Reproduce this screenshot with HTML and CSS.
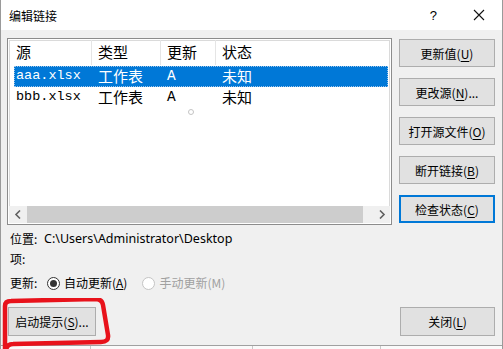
FILE: index.html
```html
<!DOCTYPE html>
<html lang="zh-CN">
<head>
    <meta charset="UTF-8">
    <meta name="viewport" content="width=device-width, initial-scale=1.0">
    <title>编辑链接</title>
    <link rel="stylesheet" href="styles.css">
</head>
<body>
    <div class="dialog">
        <div class="titlebar">
            <span class="title">编辑链接</span>
            <span class="help">?</span>
            <svg class="close-x" width="12" height="12" viewBox="0 0 12 12">
                <path d="M1 1 L11 11 M11 1 L1 11" stroke="#111" stroke-width="1.1" fill="none"/>
            </svg>
        </div>

        <div class="content">
            <div class="main">
                <div class="listbox">
                    <div class="list-head">
                        <div class="col c1">源</div>
                        <div class="col c2">类型</div>
                        <div class="col c3">更新</div>
                        <div class="col c4">状态</div>
                    </div>
                    <div class="list-row selected">
                        <div class="col c1 mono">aaa.xlsx</div>
                        <div class="col c2">工作表</div>
                        <div class="col c3 mono">A</div>
                        <div class="col c4">未知</div>
                    </div>
                    <div class="list-row">
                        <div class="col c1 mono">bbb.xlsx</div>
                        <div class="col c2">工作表</div>
                        <div class="col c3 mono">A</div>
                        <div class="col c4">未知</div>
                    </div>
                    <div class="list-fill">
                        <span class="dot"></span>
                    </div>
                    <div class="hscroll">
                        <div class="arrow">
                            <svg width="8" height="9" viewBox="0 0 8 9"><path d="M6 0.5 L2 4.5 L6 8.5" stroke="#606060" stroke-width="1.6" fill="none"/></svg>
                        </div>
                        <div class="thumb"></div>
                        <div class="arrow">
                            <svg width="8" height="9" viewBox="0 0 8 9"><path d="M2 0.5 L6 4.5 L2 8.5" stroke="#606060" stroke-width="1.6" fill="none"/></svg>
                        </div>
                    </div>
                </div>

                <div class="side-buttons">
                    <button class="btn">更新值(<u>U</u>)</button>
                    <button class="btn">更改源(<u>N</u>)...</button>
                    <button class="btn">打开源文件(<u>O</u>)</button>
                    <button class="btn">断开链接(<u>B</u>)</button>
                    <button class="btn focused">检查状态(<u>C</u>)</button>
                </div>
            </div>

            <div class="info">
                <div class="info-line">
                    <span class="label">位置:</span>
                    <span class="path">C:\Users\Administrator\Desktop</span>
                </div>
                <div class="info-line">
                    <span class="label">项:</span>
                </div>
                <div class="info-line update-line">
                    <span class="label">更新:</span>
                    <label class="radio">
                        <span class="radio-dot checked"></span>自动更新(<u>A</u>)
                    </label>
                    <label class="radio disabled">
                        <span class="radio-dot"></span>手动更新(M)
                    </label>
                </div>
            </div>

            <div class="bottom">
                <button class="btn btn-startup">启动提示(<u>S</u>)...</button>
                <button class="btn btn-close">关闭(<u>L</u>)</button>
            </div>
        </div>

        <div class="sheet-edge">
            <span></span><span></span><span></span>
        </div>

        <svg class="markup" width="120" height="60" viewBox="0 0 120 60">
            <path d="M4 60 L4 8 Q4 3 10 3 L94 1 Q101 1 102 7 L107 37 Q108 44 100 44 L12 46 Q6 46 5 52"
                  stroke="#e8121b" stroke-width="4.5" fill="none" stroke-linecap="round" stroke-linejoin="round"/>
        </svg>
    </div>
</body>
</html>
```

FILE: styles.css
```css
html, body {
    margin: 0;
    padding: 0;
}
body {
    font-family: "Noto Sans CJK SC", "Noto Sans", sans-serif;
    font-size: 12px;
    color: #000;
    background: #f0f0f0;
}
.dialog {
    position: relative;
    width: 503px;
    height: 349px;
    box-sizing: border-box;
    border-left: 1px solid #9a9a9a;
    border-right: 1px solid #9a9a9a;
    background: #f0f0f0;
    overflow: hidden;
}
.titlebar {
    height: 30px;
    background: #fff;
    display: flex;
    align-items: center;
    padding-left: 8px;
}
.title {
    flex: 1;
    font-size: 12px;
}
.help {
    font-family: "Liberation Sans", sans-serif;
    font-size: 13px;
    margin-right: 36px;
}
.close-x {
    margin-right: 17px;
}
.content {
    padding: 8px 7px 0 6px;
}
.main {
    display: flex;
    gap: 7px;
}
.listbox {
    width: 385px;
    height: 187px;
    box-sizing: border-box;
    border: 1px solid #8c8c8c;
    padding: 1px;
    background: #fff;
    box-shadow: inset 0 0 0 1px #fff, inset 0 0 0 2px #dadada;
    display: flex;
    flex-direction: column;
}
.list-head, .list-row {
    display: flex;
    font-size: 15px;
}
.list-head {
    height: 25px;
    align-items: center;
}
.list-head .col {
    border-right: 1px solid #e5e5e5;
    height: 25px;
    line-height: 24px;
    box-sizing: border-box;
}
.list-head .c4 {
    border-right: none;
}
.col {
    white-space: nowrap;
    box-sizing: border-box;
}
.list-head .c1 { width: 83px; padding-left: 7px; }
.c2 { width: 69px; padding-left: 6px; }
.c3 { width: 55px; padding-left: 6px; }
.c4 { flex: 1; padding-left: 6px; }
.list-row {
    height: 20px;
    line-height: 20px;
    margin-left: 5px;
    margin-right: 2px;
}
.list-row .c1 { width: 78px; padding-left: 2px; }
.list-row .c3 { font-size: 14.5px; }
.list-row.selected {
    height: 21px;
    margin-top: 1px;
    background: #0078d7;
    color: #fff;
    outline: 1px dotted #9cc4ea;
    outline-offset: -1px;
}
.mono {
    font-family: "Liberation Mono", monospace;
    font-size: 13.5px;
}
.list-fill {
    flex: 1;
    position: relative;
}
.dot {
    position: absolute;
    left: 179px;
    top: 2px;
    width: 4px;
    height: 4px;
    border: 1px solid #c4c4c4;
    border-radius: 50%;
}
.hscroll {
    height: 17px;
    display: flex;
    align-items: center;
    background: #f0f0f0;
}
.arrow {
    width: 17px;
    height: 17px;
    display: flex;
    align-items: center;
    justify-content: center;
}
.thumb {
    flex: 1;
    height: 17px;
    background: #cdcdcd;
    margin: 0 10px 0 1px;
}
.side-buttons {
    display: flex;
    flex-direction: column;
    gap: 11px;
    padding-top: 1px;
}
.btn {
    width: 96px;
    height: 28px;
    box-sizing: border-box;
    font-family: "Noto Sans CJK SC", "Noto Sans", sans-serif;
    font-size: 12px;
    color: #000;
    background: #e1e1e1;
    border: 1px solid #adadad;
    padding: 0;
    white-space: nowrap;
}
.btn.focused {
    border: 2px solid #0078d7;
}
.btn u {
    text-decoration-thickness: 1px;
    text-underline-offset: 2px;
}
.info {
    padding-top: 4px;
    padding-left: 3px;
}
.info-line {
    height: 20px;
    line-height: 20px;
    display: flex;
    align-items: center;
    white-space: nowrap;
}
.label {
    width: 34px;
}
.path {
    font-family: "Noto Sans", sans-serif;
    font-size: 12.5px;
}
.update-line {
    margin-top: 2px;
    height: 24px;
}
.radio {
    display: flex;
    align-items: center;
    margin-right: 12px;
}
.radio-dot {
    width: 13px;
    height: 13px;
    box-sizing: border-box;
    border: 1px solid #333;
    border-radius: 50%;
    background: #fff;
    margin-right: 4px;
    margin-left: 3px;
    position: relative;
}
.radio-dot.checked::after {
    content: "";
    position: absolute;
    left: 2px;
    top: 2px;
    width: 7px;
    height: 7px;
    border-radius: 50%;
    background: #333;
}
.radio.disabled {
    color: #a0a0a0;
}
.radio.disabled .radio-dot {
    border-color: #c4c4c4;
}
.bottom {
    display: flex;
    justify-content: space-between;
    margin-top: 12px;
    padding-left: 1px;
}
.btn-startup {
    width: 88px;
    height: 29px;
}
.btn-close {
    width: 95px;
    height: 29px;
}
.sheet-edge {
    position: absolute;
    left: 0;
    right: 0;
    bottom: 0;
    height: 3px;
    border-top: 1px solid #a0a0a0;
    background: #fafafa;
}
.sheet-edge span {
    position: absolute;
    top: 0;
    bottom: 0;
    width: 1px;
    background: #c8c8c8;
}
.sheet-edge span:nth-child(1) { left: 89px; }
.sheet-edge span:nth-child(2) { left: 251px; }
.sheet-edge span:nth-child(3) { left: 379px; }
.markup {
    position: absolute;
    left: 0;
    top: 298px;
}
```
